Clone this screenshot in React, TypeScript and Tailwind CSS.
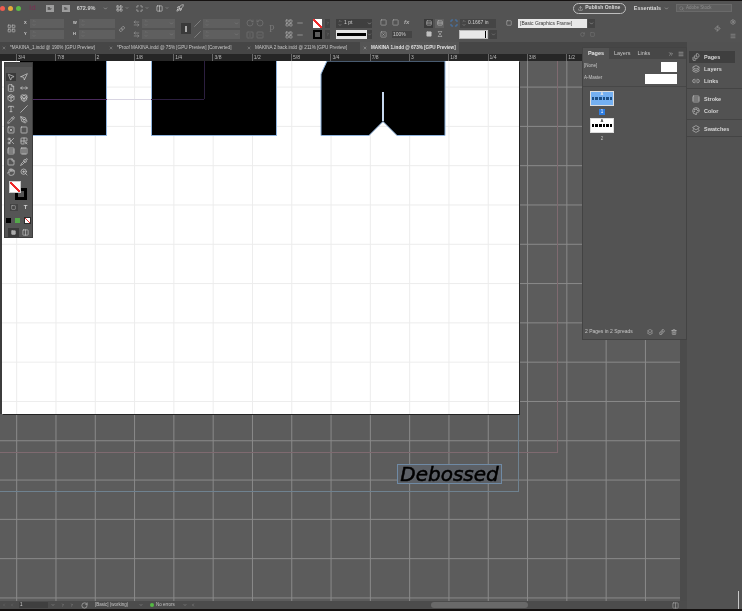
import React from "react";
import {
  ChevronDown, ChevronUp, ChevronRight, ChevronLeft, ChevronsRight, Menu, X, Search, Upload, Layers, Link2, Rocket, LayoutGrid,
  Columns2, Square, Maximize, MousePointer2, Navigation, FilePlus, MoveHorizontal, Package, PackageOpen, Type, Slash, PenTool,
  Pencil, SquareX, Scissors, Grid2x2X, Rows3, Columns3, StickyNote, Pipette, Hand, ZoomIn, Trash2, Palette, Zap, Settings,
  RotateCw, RotateCcw, FlipHorizontal, FlipVertical, Link, ArrowLeftRight, Layers2, FileStack, Minus, Hourglass,
} from "lucide-react";

const tabs = [
  { name: "*MAKINA_1.indd @ 190% [GPU Preview]", w: "w-[107px]" },
  { name: "*Proof MAKINA.indd @ 75% [GPU Preview] [Converted]", w: "w-[138px]" },
  { name: "MAKINA 2 back.indd @ 211% [GPU Preview]", w: "w-[115px]" },
];

const rulerLabels = ["3/4", "7/8", "2", "1/8", "1/4", "3/8", "1/2", "5/8", "3/4", "7/8", "3", "1/8", "1/4", "3/8", "1/2"];

const tools = [
  [MousePointer2, Navigation],
  [FilePlus, MoveHorizontal],
  [Package, PackageOpen],
  [Type, Slash],
  [Pencil, PenTool],
  [SquareX, Square],
  [Scissors, Grid2x2X],
  [Rows3, Columns3],
  [StickyNote, Pipette],
  [Hand, ZoomIn],
];

const Field = ({ w, text, chevron }: { w: string; text?: string; chevron?: boolean }) => (
  <div className={`${w} h-[9px] bg-[#5f5f5f] flex items-center text-[5px] text-[#c8c8c8]`}>
    <div className="w-[7px] flex flex-col items-center text-[#8c8c8c]">
      <ChevronUp size={4} />
      <ChevronDown size={4} />
    </div>
    <span className="flex-1 pl-1">{text}</span>
    {chevron && <ChevronDown size={5} className="text-[#8c8c8c] mr-[1px]" />}
  </div>
);

const Labeled = ({ label, w }: { label: string; w: string }) => (
  <div className="flex items-center gap-[3px]">
    <span className="w-[3px] text-[4px] font-bold text-[#d0d0d0]">{label}</span>
    <Field w={w} />
  </div>
);

const DockItem = ({ icon, label, active }: { icon: React.ReactNode; label: string; active?: boolean }) => (
  <div className={`h-[12px] ml-[2px] mr-[7px] flex items-center gap-[4px] pl-[2px] text-[5.5px] font-bold text-[#d8d8d8] ${active ? "bg-[#3f3f3f]" : ""}`}>
    <span className="w-[9px] flex justify-center text-[#c4c4c4]">{icon}</span>
    {label}
  </div>
);

const PageThumb = ({ selected, letter, num }: { selected?: boolean; letter: string; num: string }) => (
  <div className="flex flex-col items-center">
    <div className={`relative w-[24px] h-[15px] border border-[#dddddd] flex items-center justify-center gap-[1px] ${selected ? "bg-[#74b0f2]" : "bg-white"}`}>
      <span className={`absolute top-[-1px] text-[4px] font-bold ${selected ? "text-[#e8e8e8]" : "text-[#333333]"}`}>{letter}</span>
      {[0, 1, 2, 3, 4, 5].map((i) => (
        <span key={i} className={`w-[2.6px] h-[3px] ${selected ? "bg-[#1d4f85]" : "bg-black"}`} />
      ))}
    </div>
    <span className={`mt-[3px] text-[4.5px] leading-[6px] px-[1.5px] ${selected ? "bg-[#2f7de0] text-white" : "text-[#c0c0c0]"}`}>{num}</span>
  </div>
);

const App = () => {
  return (
    <div className="relative w-[742px] h-[611px] overflow-hidden bg-[#141110] flex flex-col font-['Liberation_Sans',sans-serif] blur-[0.5px]">
      {/* app bar */}
      <div className="h-[14px] mt-[1px] shrink-0 bg-[#535353] flex items-center text-[#d8d8d8]">
        <span className="w-[5px] h-[5px] rounded-full bg-[#ee5b50]" />
        <span className="ml-[3px] w-[5px] h-[5px] rounded-full bg-[#e5a93a]" />
        <span className="ml-[3px] w-[5px] h-[5px] rounded-full bg-[#5cba48]" />
        <span className="ml-[8px] text-[8px] text-[#7c2f52]">Id</span>
        <span className="ml-[10px] w-[8px] h-[7px] bg-[#9d9d9d] text-[4px] leading-[7px] text-center text-[#444444] font-bold">Br</span>
        <span className="ml-[8px] w-[8px] h-[7px] bg-[#9d9d9d] text-[4px] leading-[7px] text-center text-[#444444] font-bold">St</span>
        <span className="ml-[7px] w-[26px] text-[5.5px] font-bold text-[#cfcfcf]">672.9%</span>
        <ChevronDown size={5} />
        <LayoutGrid size={7} className="ml-[8px]" />
        <ChevronDown size={4} className="ml-[2px]" />
        <Maximize size={7} className="ml-[7px]" />
        <ChevronDown size={4} className="ml-[2px]" />
        <Columns2 size={7} className="ml-[7px]" />
        <ChevronDown size={4} className="ml-[2px]" />
        <Rocket size={8} className="ml-[7px]" />
        <div className="ml-auto w-[53px] h-[11px] rounded-full border border-[#bdbdbd] flex items-center justify-center gap-[2px] text-[5px] font-bold">
          <Upload size={5} />
          Publish Online
        </div>
        <span className="ml-[8px] text-[5.5px] font-bold">Essentials</span>
        <ChevronDown size={5} className="ml-[3px]" />
        <div className="ml-[7px] mr-[10px] w-[56px] h-[8px] bg-[#5e5e5e] border border-[#6a6a6a] flex items-center gap-[2px] pl-[2px] text-[4.5px] text-[#8f8f8f]">
          <Search size={5} />
          Adobe Stock
        </div>
      </div>

      {/* control panel */}
      <div className="h-[27px] shrink-0 bg-[#535353] flex items-center pl-[7px] text-[#a0a0a0]">
        <LayoutGrid size={9} className="text-[#b4b4b4]" />
        <div className="ml-[8px] flex flex-col gap-[2px]">
          <Labeled label="X" w="w-[34px]" />
          <Labeled label="Y" w="w-[34px]" />
        </div>
        <div className="ml-[9px] flex flex-col gap-[2px]">
          <Labeled label="W" w="w-[36px]" />
          <Labeled label="H" w="w-[36px]" />
        </div>
        <Link size={6} className="ml-[4px] text-[#c8c8c8]" />
        <div className="ml-[8px] flex flex-col gap-[2px]">
          <div className="flex items-center gap-[2px]"><ArrowLeftRight size={7} /><Field w="w-[33px]" chevron /></div>
          <div className="flex items-center gap-[2px]"><ArrowLeftRight size={7} /><Field w="w-[33px]" chevron /></div>
        </div>
        <div className="ml-[6px] w-[10px] h-[11px] bg-[#3a3a3a] flex items-center justify-center"><span className="w-[2px] h-[6px] border border-[#aaaaaa]" /></div>
        <div className="ml-[3px] flex flex-col gap-[2px]">
          <div className="flex items-center gap-[2px]"><Slash size={7} /><Field w="w-[37px]" chevron /></div>
          <div className="flex items-center gap-[2px]"><Slash size={7} /><Field w="w-[37px]" chevron /></div>
        </div>
        <div className="ml-[6px] grid grid-cols-2 gap-x-[2px] gap-y-[4px] text-[#777777]">
          <RotateCw size={8} /><RotateCcw size={8} /><FlipHorizontal size={8} /><FlipVertical size={8} />
        </div>
        <span className="ml-[5px] w-[8px] font-['Liberation_Serif',serif] text-[10px] text-[#777777]">P</span>
        <div className="ml-[8px] grid grid-cols-2 gap-x-[3px] gap-y-[4px] text-[#b0b0b0]">
          <LayoutGrid size={8} /><Minus size={8} /><LayoutGrid size={8} /><Minus size={8} />
        </div>
        <div className="ml-[9px] flex flex-col gap-[2px]">
          <div className="flex items-center gap-[3px]">
            <span className="w-[9px] h-[9px] bg-[linear-gradient(to_top_right,#ffffff_42%,#ee2b2b_42%,#ee2b2b_58%,#ffffff_58%)]" />
            <span className="w-[5px] h-[9px] bg-[#444444] flex items-center justify-center"><ChevronRight size={4} /></span>
          </div>
          <div className="flex items-center gap-[3px]">
            <span className="w-[9px] h-[9px] border-[2px] border-black bg-[#5c5c5c]" />
            <span className="w-[5px] h-[9px] bg-[#444444] flex items-center justify-center"><ChevronRight size={4} /></span>
          </div>
        </div>
        <div className="ml-[6px] flex flex-col gap-[2px]">
          <div className="w-[36px] h-[9px] bg-[#3f3f3f] flex items-center text-[5px] text-[#d0d0d0]">
            <div className="w-[7px] flex flex-col items-center"><ChevronUp size={4} /><ChevronDown size={4} /></div>
            <span className="flex-1 pl-[1px]">1 pt</span>
            <ChevronDown size={5} />
          </div>
          <div className="w-[36px] h-[9px] flex">
            <div className="w-[31px] bg-[#e4e4e4] flex items-center px-[1px]"><span className="w-full h-[3px] bg-black" /></div>
            <div className="flex-1 bg-[#3f3f3f] flex items-center justify-center"><ChevronDown size={5} /></div>
          </div>
        </div>
        <div className="ml-[8px] grid grid-cols-3 gap-x-[4px] gap-y-[5px] text-[#b0b0b0]">
          <Square size={7} /><Square size={7} /><span className="text-[6px] leading-[7px] italic font-bold">fx</span>
          <SquareX size={7} /><span className="col-span-2 w-[20px] h-[7px] bg-[#444444] text-[5px] leading-[7px] text-[#d0d0d0] pl-[1px]">100%</span>
        </div>
        <div className="ml-[12px] grid grid-cols-2 gap-x-[2px] gap-y-[2px] text-[#c0c0c0]">
          <span className="w-[9px] h-[9px] bg-[#3a3a3a] flex items-center justify-center"><Rows3 size={6} /></span>
          <span className="w-[9px] h-[9px] bg-[#616161] flex items-center justify-center"><Rows3 size={6} /></span>
          <span className="w-[9px] h-[9px] flex items-center justify-center"><Square size={6} fill="#c0c0c0" /></span>
          <span className="w-[9px] h-[9px] flex items-center justify-center"><Hourglass size={6} /></span>
        </div>
        <div className="ml-[6px] flex flex-col gap-[2px]">
          <div className="flex items-center gap-[2px]">
            <Maximize size={8} className="text-[#3f8ee8]" />
            <div className="w-[36px] h-[9px] bg-[#454545] flex items-center text-[5px] text-[#d0d0d0]">
              <div className="w-[7px] flex flex-col items-center"><ChevronUp size={4} /><ChevronDown size={4} /></div>
              <span className="pl-[1px]">0.1667 in</span>
            </div>
          </div>
          <div className="ml-[9px] w-[38px] h-[9px] flex">
            <div className="w-[29px] bg-[#e8e8e8] border border-[#bbbbbb] flex justify-end pr-[1px]"><span className="w-[1px] bg-black" /></div>
            <div className="ml-[1px] flex-1 bg-[#444444] flex items-center justify-center"><ChevronDown size={5} /></div>
          </div>
        </div>
        <div className="ml-[9px] flex flex-col gap-[2px]">
          <div className="flex items-center gap-[6px]">
            <Square size={6} className="text-[#c0c0c0]" />
            <div className="w-[77px] h-[9px] flex">
              <span className="w-[69px] bg-[#e8e8e8] text-[5px] leading-[9px] pl-[2px] text-[#333333] shrink-0">[Basic Graphics Frame]</span>
              <span className="ml-[1px] w-[7px] bg-[#444444] flex items-center justify-center shrink-0"><ChevronDown size={5} className="text-[#cccccc]" /></span>
            </div>
          </div>
          <div className="h-[9px] flex items-center justify-end gap-[5px] text-[#808080]">
            <RotateCw size={5} /><Square size={5} />
          </div>
        </div>
        <Zap size={7} className="ml-auto text-[#a8a8a8]" />
        <div className="ml-[9px] mr-[6px] flex flex-col gap-[8px] text-[#a8a8a8]">
          <Settings size={6} />
          <Menu size={6} />
        </div>
      </div>

      <div className="h-[567px] shrink-0 flex">
        <div className="w-[687px] flex flex-col">
          {/* tabs */}
          <div className="h-[12px] shrink-0 bg-[#464646] flex items-stretch text-[4.6px] text-[#c6c6c6]">
            {tabs.map((t) => (
              <div key={t.name} className={`${t.w} flex items-center gap-[4px] pl-[2px] whitespace-nowrap`}>
                <X size={4} className="shrink-0" />
                {t.name}
              </div>
            ))}
            <div className="w-[99px] bg-[#555555] flex items-center gap-[4px] pl-[3px] whitespace-nowrap text-[#e4e4e4] font-bold">
              <X size={4} className="shrink-0" />
              MAKINA 1.indd @ 673% [GPU Preview]
            </div>
          </div>

          {/* ruler */}
          <div className="h-[7px] shrink-0 bg-[#262626] flex pl-[16px] text-[5px] leading-[6px] text-[#bcbcbc] overflow-hidden">
            {rulerLabels.map((l, i) => (
              <span key={i} className="w-[39.3px] shrink-0 border-l border-[#666666] pl-[1px]">{l}</span>
            ))}
          </div>

          <div className="flex-1 flex min-h-0">
            {/* pasteboard */}
            <div className="relative w-[680px] overflow-hidden bg-[#5c5c5c] bg-[linear-gradient(to_right,#8a8a8a_1px,transparent_1px),linear-gradient(to_bottom,#8a8a8a_1px,transparent_1px)] bg-[size:39.3px_39.3px] bg-[position:16.2px_25.6px]">
              <div className="absolute left-0 top-0 w-[2px] h-[353px] bg-[#3c3c3c]" />
              {/* guides outside the page */}
              <div className="absolute left-0 top-0 w-[558px] h-[392px] border-r border-b border-[#7f6a70]" />
              <div className="absolute left-0 top-0 w-[519px] h-[431px] border-r border-b border-[#6f8290]" />
              {/* page */}
              <div className="absolute left-[2px] top-0 w-[517px] h-[353px] bg-white bg-[linear-gradient(to_right,#ececec_1px,transparent_1px),linear-gradient(to_bottom,#ececec_1px,transparent_1px)] bg-[size:39.3px_39.3px] bg-[position:14.2px_25.6px] shadow-[1px_1px_0_#222222]" />
              {/* placed artwork */}
              <div className="absolute left-[20px] top-0 w-[87px] h-[75px] bg-black border-r border-b border-[#8fb4de]" />
              <div className="absolute left-[151px] top-0 w-[126px] h-[75px] bg-black border-l border-b border-r border-[#8fb4de]" />
              <svg className="absolute left-[318px] top-0" width="130" height="76" viewBox="0 0 130 76">
                <path d="M9 0 L3 13 L3 74.500 L51 74.500 L65 60.500 L79 74.500 L127 74.500 L127 0 Z" fill="#000000" stroke="#8fb4de" strokeWidth="1" />
                <rect x="64" y="31" width="2" height="29" fill="#c6d8ee" />
              </svg>
              <div className="absolute left-[33px] top-[38px] w-[74px] h-px bg-[#4a2a5c]" />
              <div className="absolute left-[107px] top-[38px] w-[44px] h-px bg-[#d8d5e2]" />
              <div className="absolute left-[151px] top-[38px] w-[53px] h-px bg-[#2c1f3f]" />
              <div className="absolute left-[204px] top-0 w-px h-[38px] bg-[#2c1f3f]" />
              {/* debossed text frame */}
              <div className="absolute left-[397px] top-[403px] w-[105px] h-[20px] bg-[#5c6066] border border-[#6f8aa5] flex items-center justify-center">
                <span className="font-['DejaVu_Sans',sans-serif] italic text-[20px] leading-[20px] text-black whitespace-nowrap [-webkit-text-stroke:0.5px_black]">Debossed</span>
              </div>
              {/* tools panel */}
              <div className="absolute left-[4px] top-[1px] w-[29px] h-[176px] bg-[#555555] border border-[#3d3d3d] text-[#d4d4d4] flex flex-col items-center">
                <div className="w-full h-[5px] bg-[#4a4a4a] mb-[6px]" />
                <div className="flex flex-col gap-[2.600px]">
                  {tools.map((row, i) => (
                    <div key={i} className="flex gap-[3px] -translate-x-[1px]">
                      {row.map((Icon, j) => (
                        <span key={j} className={`w-[10px] h-[8px] flex items-center justify-center ${i === 0 && j === 0 ? "bg-[#3a3a3a]" : ""}`}>
                          <Icon size={8} />
                        </span>
                      ))}
                    </div>
                  ))}
                </div>
                <div className="relative mt-[5px] w-[20px] h-[20px]">
                  <span className="absolute left-[6px] top-[7px] w-[12px] h-[12px] border-[3px] border-black" />
                  <span className="absolute left-0 top-0 w-[12px] h-[12px] border border-[#cccccc] bg-[linear-gradient(to_top_right,#ffffff_42%,#ee2b2b_42%,#ee2b2b_58%,#ffffff_58%)]" />
                </div>
                <div className="mt-[5px] flex gap-[6px] items-center text-[6px] font-bold">
                  <span className="w-[8px] h-[7px] bg-[#444444] flex items-center justify-center"><Square size={5} /></span>
                  T
                </div>
                <div className="mt-[5px] flex gap-[4px] items-center">
                  <span className="w-[5px] h-[5px] bg-black" />
                  <span className="w-[5px] h-[5px] bg-[#54a84a]" />
                  <span className="w-[7px] h-[7px] border border-[#2c2c2c] bg-[linear-gradient(to_top_right,#ffffff_42%,#ee2b2b_42%,#ee2b2b_58%,#ffffff_58%)]" />
                </div>
                <div className="mt-[4px] flex gap-[3px] items-center">
                  <span className="w-[11px] h-[9px] bg-[#3a3a3a] flex items-center justify-center"><Square size={5} fill="#aaaaaa" /></span>
                  <Columns2 size={7} />
                </div>
              </div>
            </div>
            <div className="w-[7px] bg-[#4b4b4b]" />
          </div>

          {/* status bar */}
          <div className="h-[8px] shrink-0 bg-[#4c4c4c] flex items-center pl-[2px] text-[4.5px] text-[#c4c4c4] whitespace-nowrap">
            <ChevronLeft size={4} className="text-[#888888]" />
            <ChevronLeft size={4} className="ml-[4px] text-[#888888]" />
            <div className="ml-[5px] w-[29px] h-[6px] bg-[#3f3f3f] pl-[1px] leading-[6px] text-[#d0d0d0]">1</div>
            <ChevronDown size={4} className="ml-[3px]" />
            <ChevronRight size={4} className="ml-[6px]" />
            <ChevronRight size={4} className="ml-[5px]" />
            <RotateCw size={7} className="ml-[7px]" />
            <span className="ml-[7px] w-[35px]">[Basic] (working)</span>
            <ChevronDown size={4} className="ml-[9px]" />
            <span className="ml-[7px] w-[4px] h-[4px] rounded-full bg-[#55bb44]" />
            <span className="ml-[2px] w-[20px]">No errors</span>
            <ChevronDown size={4} className="ml-[7px]" />
            <ChevronLeft size={4} className="ml-[4px]" />
            <div className="ml-[236px] w-[97px] h-[6px] rounded-full bg-[#696969]" />
            <Columns2 size={7} className="ml-[144px] text-[#aaaaaa]" />
          </div>
        </div>

        {/* icon dock */}
        <div className="relative w-[55px] bg-[#525252] pt-[9px] text-[#cccccc]">
          <div className="border-b border-[#444444] pb-[1px]">
            <DockItem active icon={<FileStack size={8} />} label="Pages" />
            <DockItem icon={<Layers size={8} />} label="Layers" />
            <DockItem icon={<Link2 size={8} />} label="Links" />
          </div>
          <div className="border-b border-[#444444] pt-[4px] pb-[2px]">
            <DockItem icon={<Rows3 size={8} />} label="Stroke" />
            <DockItem icon={<Palette size={8} />} label="Color" />
          </div>
          <div className="border-b border-[#444444] pt-[3px] pb-[1px]">
            <DockItem icon={<Layers2 size={8} />} label="Swatches" />
          </div>
          <div className="absolute right-[3px] bottom-0 w-px h-[18px] bg-[#c8c8c8]" />
        </div>
      </div>

      {/* Pages panel */}
      <div className="absolute left-[582px] top-[47px] w-[105px] h-[293px] bg-[#535353] border border-[#434343] flex flex-col text-[#c8c8c8]">
        <div className="h-[11px] shrink-0 bg-[#474747] flex items-stretch text-[5.500px]">
          <div className="w-[26px] bg-[#535353] flex items-center justify-center font-bold text-[#e4e4e4]">Pages</div>
          <div className="ml-[5px] flex items-center">Layers</div>
          <div className="ml-[7px] flex items-center">Links</div>
          <ChevronsRight size={6} className="ml-auto self-center" />
          <Menu size={6} className="ml-[4px] mr-[2px] self-center" />
        </div>
        <div className="h-[28px] shrink-0 border-b border-[#474747] text-[4.500px] pt-[2px] pr-[9px]">
          <div className="h-[11px] pl-[1px] flex items-center justify-between">
            [None]
            <span className="w-[16px] h-[10px] bg-white" />
          </div>
          <div className="mt-[1px] h-[11px] pl-[1px] flex items-center justify-between">
            A-Master
            <span className="w-[32px] h-[10px] bg-white" />
          </div>
        </div>
        <div className="flex-1 pl-[7px] pt-[4px] flex flex-col items-start">
          <PageThumb selected letter="A" num="1" />
          <div className="mt-[3px]"><PageThumb letter="A" num="2" /></div>
        </div>
        <div className="h-[11px] mb-[2px] shrink-0 flex items-center pl-[2px] pr-[9px] text-[5px]">
          <span className="flex-1">2 Pages in 2 Spreads</span>
          <Layers2 size={6} />
          <FileStack size={6} className="ml-[6px]" />
          <Trash2 size={6} className="ml-[6px]" />
        </div>
      </div>
    </div>
  );
};

export default App;
